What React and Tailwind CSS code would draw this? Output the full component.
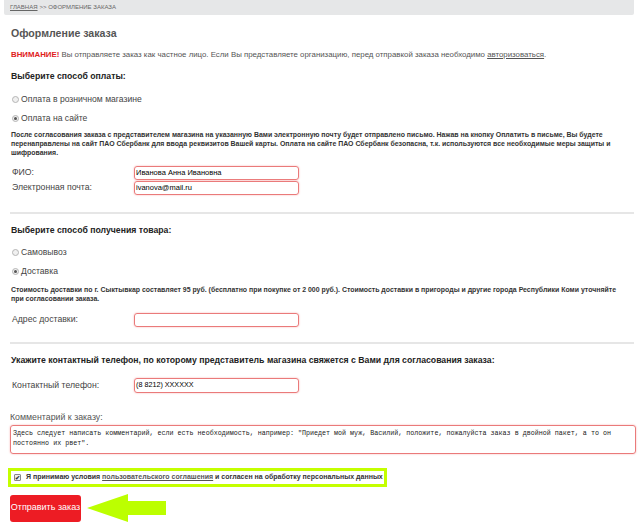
import React from "react";

function Radio({ checked, label, className }) {
  return (
    <div className={"flex items-center h-[14px] pl-[12px] " + className}>
      <span className="w-[7px] h-[7px] rounded-full border border-[#b5b5b5] bg-[#f0f0f0] flex items-center justify-center">
        {checked && <span className="w-[3px] h-[3px] rounded-full bg-[#555]" />}
      </span>
      <span className="ml-[2px] text-[8.6px] text-[#444]">{label}</span>
    </div>
  );
}

function Field({ label, value, className, h = "h-[14px]", ts = "text-[7.5px]" }) {
  return (
    <div className={"flex items-center pl-[12px] " + className}>
      <span className="w-[122px] text-[8.7px] text-[#444]">{label}</span>
      <div className={"w-[165px] rounded-[3px] border border-[#ea7a7a] shadow-[0_0_2px_#f6b0b0] flex items-center px-[1px] text-black " + h + " " + ts}>
        {value}
      </div>
    </div>
  );
}

export default function App() {
  return (
    <div className="w-[640px] h-[523px] overflow-hidden bg-white" style={{ fontFamily: '"Liberation Sans", Arial, sans-serif' }}>
      <div className="ml-[4px] w-[630px] h-[15px] bg-[#e6e7e8] rounded-b-[2px] flex items-center pl-[6px] text-[6px] text-[#666]">
        <span className="underline">ГЛАВНАЯ</span>
        <span className="ml-[2px]">&gt;&gt; ОФОРМЛЕНИЕ ЗАКАЗА</span>
      </div>
      <div className="pl-[10px] pr-[6px]">
        <div className="mt-[10px] h-[16px] leading-[16px] pl-[1px] text-[10.6px] font-bold text-[#555]">Оформление заказа</div>
        <div className="mt-[8px] h-[12px] leading-[12px] pl-[1px] text-[7.85px] text-[#555] whitespace-nowrap">
          <span className="font-bold text-[#e0201c]">ВНИМАНИЕ!</span> Вы отправляете заказ как частное лицо. Если Вы представляете организацию, перед отправкой заказа необходимо <span className="underline">авторизоваться</span>.
        </div>
        <div className="mt-[8px] h-[14px] leading-[14px] pl-[1px] text-[8.7px] font-bold text-[#222]">Выберите способ оплаты:</div>
        <Radio className="mt-[9px] -ml-[10px]" label="Оплата в розничном магазине" />
        <Radio className="mt-[5px] -ml-[10px]" checked label="Оплата на сайте" />
        <div className="mt-[4.5px] pl-[1px] w-[610px] text-[6.95px] leading-[9px] font-bold text-[#333]">
          После согласования заказа с представителем магазина на указанную Вами электронную почту будет отправлено письмо. Нажав на кнопку Оплатить в письме, Вы будете перенаправлены на сайт ПАО Сбербанк для ввода реквизитов Вашей карты. Оплата на сайте ПАО Сбербанк безопасна, т.к. используются все необходимые меры защиты и шифрования.
        </div>
        <Field className="mt-[9.5px] -ml-[10px]" label="ФИО:" value="Иванова Анна Ивановна" />
        <Field className="mt-[1px] -ml-[10px]" label="Электронная почта:" value="ivanova@mail.ru" />
        <div className="mt-[17px] h-[2px] w-[624px] bg-[#e6e6e6]" />
        <div className="mt-[9px] h-[14px] leading-[14px] pl-[1px] text-[8.7px] font-bold text-[#222]">Выберите способ получения товара:</div>
        <Radio className="mt-[8px] -ml-[10px]" label="Самовывоз" />
        <Radio className="mt-[5px] -ml-[10px]" checked label="Доставка" />
        <div className="mt-[6.5px] pl-[1px] w-[616px] text-[6.95px] leading-[9px] font-bold text-[#333]">
          Стоимость доставки по г. Сыктывкар составляет 95 руб. (бесплатно при покупке от 2 000 руб.). Стоимость доставки в пригороды и другие города Республики Коми уточняйте при согласовании заказа.
        </div>
        <Field className="mt-[10.5px] -ml-[10px]" label="Адрес доставки:" value="" />
        <div className="mt-[15px] h-[2px] w-[624px] bg-[#e6e6e6]" />
        <div className="mt-[9px] h-[14px] leading-[14px] pl-[1px] text-[8.7px] font-bold text-[#222]">Укажите контактный телефон, по которому представитель магазина свяжется с Вами для согласования заказа:</div>
        <Field className="mt-[11px] -ml-[10px]" h="h-[15px]" ts="text-[7.2px]" label="Контактный телефон:" value="(8 8212) XXXXXX" />
        <div className="mt-[18px] h-[12px] leading-[12px] text-[8.8px] text-[#555]">Комментарий к заказу:</div>
        <div className="mt-[2px] w-[626px] h-[29px] rounded-[3px] border border-[#ea7a7a] shadow-[0_0_2px_#f6b0b0] px-[2px] pt-[2px] text-[6.7px] leading-[10px] text-[#222]" style={{ fontFamily: '"Liberation Mono", "DejaVu Sans Mono", monospace' }}>
          Здесь следует написать комментарий, если есть необходимость, например: "Приедет мой муж, Василий, положите, пожалуйста заказ в двойной пакет, а то он постоянно их рвет".
        </div>
        <div className="mt-[14px] -ml-[2px] w-[379px] h-[19px] border-[3px] border-[#c4ff00] flex items-center pl-[3px] text-[7px] font-bold text-[#333] whitespace-nowrap">
          <span className="w-[7px] h-[7px] shrink-0 rounded-[1px] border border-[#888] bg-[#eee] flex items-center justify-center text-[6px] leading-none text-[#333]">✔</span>
          <span className="ml-[5px]">Я принимаю условия <span className="underline text-[#555]">пользовательского соглашения</span> и согласен на обработку персональных данных</span>
        </div>
        <div className="mt-[7px] flex items-center">
          <div className="w-[71px] h-[27px] rounded-[3px] bg-[#ed1c24] flex items-center justify-center text-[9px] text-white">Отправить заказ</div>
          <svg className="ml-[6px]" width="80" height="28" viewBox="0 0 80 28">
            <polygon points="0,14 41,0 41,7 79,7 79,21 41,21 41,28" fill="#bcff00" />
          </svg>
        </div>
      </div>
    </div>
  );
}
